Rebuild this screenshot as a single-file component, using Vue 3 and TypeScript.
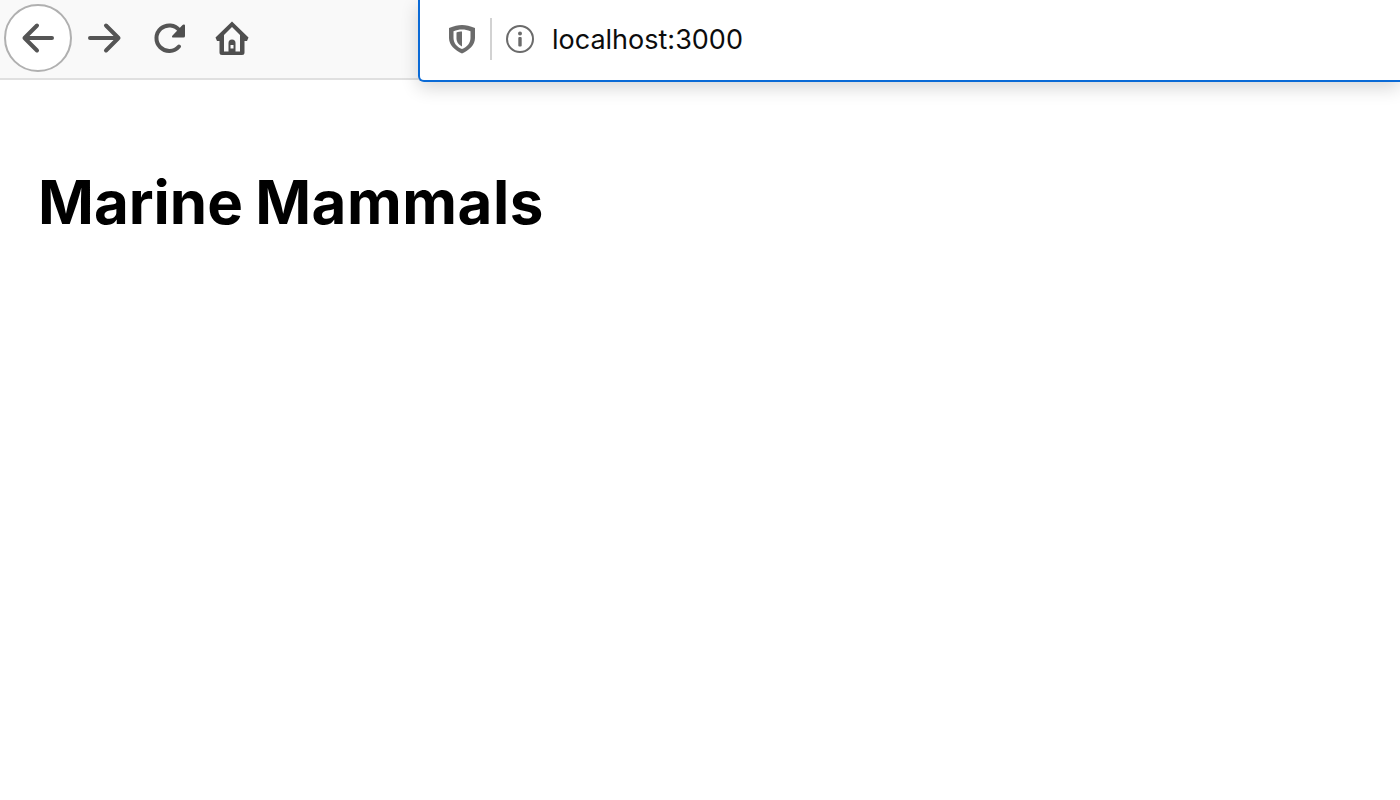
<template>
  <div class="page">
    <header class="toolbar">
      <nav class="nav-buttons">
        <button class="nav-btn back" aria-label="Back">
          <svg width="36" height="36" viewBox="0 0 36 36" fill="none">
            <path d="M32 18H4.500M17 5.500 4.500 18 17 30.500" />
          </svg>
        </button>
        <button class="nav-btn forward" aria-label="Forward">
          <svg width="36" height="36" viewBox="0 0 36 36" fill="none">
            <path d="M3 18h28.500M19 5.500 31.500 18 19 30.500" />
          </svg>
        </button>
        <button class="nav-btn reload" aria-label="Reload">
          <svg width="36" height="36" viewBox="0 0 36 36" fill="none">
            <path d="M27 26.500a12.800 12.800 0 1 1 .5-16" />
            <path class="solid" d="M32 4.500a1 1 0 0 1 1 1V16a1.500 1.500 0 0 1-1.500 1.500H21a1 1 0 0 1-.7-1.700L30.300 5.200a2 2 0 0 1 1.700-.7z" />
          </svg>
        </button>
        <button class="nav-btn home" aria-label="Home">
          <svg width="36" height="36" viewBox="0 0 36 36">
            <path class="solid" fill-rule="evenodd" d="M18 1.500 34.500 17.500 33 21H30.500v11.500a2.500 2.500 0 0 1-2.500 2.500H8a2.500 2.500 0 0 1-2.500-2.500V21H3L1.500 17.500zM18 7 10 15v16.500h4.500v-8.500a3.500 3.500 0 0 1 7 0v8.500H26V15zM16.500 25v3.500h3V25z" />
          </svg>
        </button>
      </nav>
      <div class="urlbar">
        <svg class="shield" width="28" height="30" viewBox="0 0 28 30">
          <path fill-rule="evenodd" d="M14 1C18 1 22 2 27 4V14C27 21 21 26.500 14 29.500 7 26.500 1 21 1 14V4C6 2 10 1 14 1zM14 5.500C11 5.500 8.500 6 5.500 7.200V14C5.500 19 9 23 14 25 19 23 22.500 19 22.500 14V7.200C19.500 6 17 5.500 14 5.500z" />
          <path d="M14 7.500c-2 0-4 .3-5.500 1v6c0 3.500 2.300 6.500 5.500 8z" />
        </svg>
        <span class="divider"></span>
        <svg class="info" width="30" height="30" viewBox="0 0 30 30">
          <circle cx="15" cy="15" r="13" fill="none" stroke="#6b6b6b" stroke-width="2" />
          <circle cx="15" cy="9.500" r="2" fill="#6b6b6b" />
          <rect x="13.300" y="13" width="3.400" height="9.500" rx="1" fill="#6b6b6b" />
        </svg>
        <span class="url-text">localhost:3000</span>
      </div>
    </header>
    <main class="content">
      <h1>Marine <span class="second-word">Mammals</span></h1>
    </main>
  </div>
</template>

<script setup lang="ts">
</script>

<style>
html, body { background: #fff; overflow: hidden; }
</style>

<style scoped>
.page {
  min-height: 800px;
  font-family: Inter, "Liberation Sans", sans-serif;
  background: #fff;
}

.toolbar {
  display: flex;
  align-items: flex-start;
  height: 78px;
  background: #f9f9f9;
  border-bottom: 2px solid #e0e0e0;
}

.nav-buttons {
  display: flex;
  align-items: center;
  width: 418px;
  flex-shrink: 0;
  height: 76px;
  padding-left: 4px;
  box-sizing: border-box;
}

.nav-btn {
  display: flex;
  align-items: center;
  justify-content: center;
  border: none;
  padding: 0;
  background: none;
}
.nav-btn svg path {
  stroke: #555;
  stroke-width: 4;
  stroke-linecap: round;
  stroke-linejoin: round;
}
.nav-btn svg path.solid {
  fill: #4f4f4f;
  stroke: none;
}

.back {
  width: 68px;
  height: 68px;
  border: 2px solid #b0b0b0;
  border-radius: 50%;
  background: #fff;
  box-sizing: border-box;
}
.forward { margin-left: 15px; }
.reload { margin-left: 29px; }
.home { margin-left: 26px; }

.urlbar {
  display: flex;
  align-items: center;
  flex: 1;
  height: 82px;
  padding-left: 28px;
  box-sizing: border-box;
  background: #fff;
  border: 2px solid #0a6ad6;
  border-top: none;
  border-right: none;
  border-bottom-left-radius: 6px;
  box-shadow: 0 6px 18px rgba(0, 0, 0, 0.16);
}

.shield {
  fill: #6b6b6b;
  margin-top: -2px;
}

.divider {
  width: 2px;
  height: 42px;
  margin-top: -2px;
  margin-left: 14px;
  background: #d2d2d2;
}

.info {
  margin-left: 13px;
  margin-top: -2px;
}

.url-text {
  margin-left: 17px;
  margin-top: -1px;
  font-size: 27px;
  color: #0c0c0d;
}

.content {
  padding: 89px 38px 0;
}

h1 {
  margin: 0;
  font-size: 60px;
  line-height: 66px;
  font-weight: 700;
  word-spacing: -2px;
  color: #000;
}

.second-word {
  letter-spacing: 0.55px;
}
</style>
